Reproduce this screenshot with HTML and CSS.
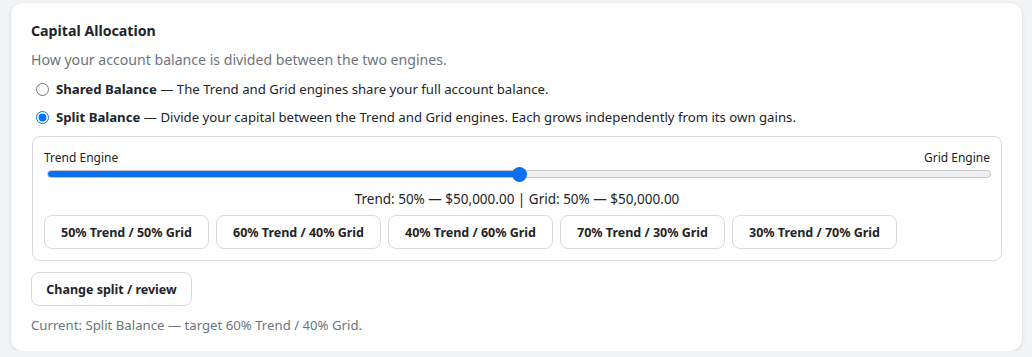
FILE: index.html
```html
<!DOCTYPE html>
<html lang="en">
<head>
    <meta charset="UTF-8">
    <meta name="viewport" content="width=device-width, initial-scale=1.0">
    <title>Capital Allocation</title>
    <link rel="stylesheet" href="styles.css">
</head>
<body>
    <div class="card">
        <h3 class="title">Capital Allocation</h3>
        <p class="sub">How your account balance is divided between the two engines.</p>
        <label class="opt">
            <input type="radio" name="mode" value="shared">
            <span><b>Shared Balance</b> — The Trend and Grid engines share your full account balance.</span>
        </label>
        <label class="opt">
            <input type="radio" name="mode" value="split" checked>
            <span><b>Split Balance</b> — Divide your capital between the Trend and Grid engines. Each grows independently from its own gains.</span>
        </label>
        <div class="split">
            <div class="ends">
                <span>Trend Engine</span>
                <span>Grid Engine</span>
            </div>
            <input type="range" class="slider" min="0" max="100" step="10" value="50" style="--p: 50%">
            <div class="summary">Trend: 50% — $50,000.00 | Grid: 50% — $50,000.00</div>
            <div class="presets">
                <button class="btn">50% Trend / 50% Grid</button>
                <button class="btn">60% Trend / 40% Grid</button>
                <button class="btn">40% Trend / 60% Grid</button>
                <button class="btn">70% Trend / 30% Grid</button>
                <button class="btn">30% Trend / 70% Grid</button>
            </div>
        </div>
        <button class="btn review">Change split / review</button>
        <p class="current">Current: Split Balance — target 60% Trend / 40% Grid.</p>
    </div>
</body>
</html>
```

FILE: styles.css
```css
body{
    margin: 0;
    padding: 3px 10px 0 11px;
    background: #f3f4f5;
    font-family: "Segoe UI", "Noto Sans", sans-serif;
    color: #212529;
}
.card{
    background: #fff;
    border-radius: 12px;
    box-shadow: 0 1px 4px rgba(0,0,0,.12);
    padding: 17px 20px 15px 20px;
    height: 348px;
    box-sizing: border-box;
}
.title{
    margin: 0 0 8px 0;
    font-size: 14.2px;
    font-weight: 700;
    line-height: 22px;
}
.sub{
    margin: 0 0 9px 0;
    font-size: 14.1px;
    color: #6c757d;
    line-height: 20px;
}
.opt{
    display: flex;
    align-items: center;
    gap: 7px;
    font-size: 13.2px;
    line-height: 20px;
    margin: 0 0 9px 5px;
}
.opt + .opt{
    margin-top: -1px;
}
.opt input{
    margin: 0;
    width: 13px;
    height: 13px;
}
.split{
    margin: 0 0 11px 1px;
    border: 1px solid #d6dadd;
    border-radius: 8px;
    padding: 13px 11px 11px 11px;
}
.ends{
    display: flex;
    justify-content: space-between;
    font-size: 12px;
    line-height: 16px;
}
.slider{
    -webkit-appearance: none;
    appearance: none;
    display: block;
    width: calc(100% - 2px);
    margin: 4px -1px 12px 3px;
    height: 8px;
    border-radius: 4px;
    border: 1px solid #c4c4c4;
    background: linear-gradient(to right, #0a6ff0 var(--p), #efefef var(--p));
    box-sizing: border-box;
}
.slider::-webkit-slider-thumb{
    -webkit-appearance: none;
    width: 15px;
    height: 15px;
    border-radius: 50%;
    background: #0a6ff0;
    border: none;
}
.summary{
    text-align: center;
    font-size: 13.5px;
    line-height: 18px;
    margin-bottom: 7px;
}
.presets{
    display: flex;
    gap: 7px;
}
.btn{
    font-family: inherit;
    font-size: 12.5px;
    font-weight: 700;
    color: #212529;
    background: #fff;
    border: 1px solid #d6dadd;
    border-radius: 8px;
    height: 34px;
    padding: 0 4px;
    width: 165px;
    white-space: nowrap;
}
.review{
    width: 161px;
}
.current{
    margin: 10px 0 0 0;
    font-size: 13.2px;
    color: #6c757d;
    line-height: 18px;
}
```
